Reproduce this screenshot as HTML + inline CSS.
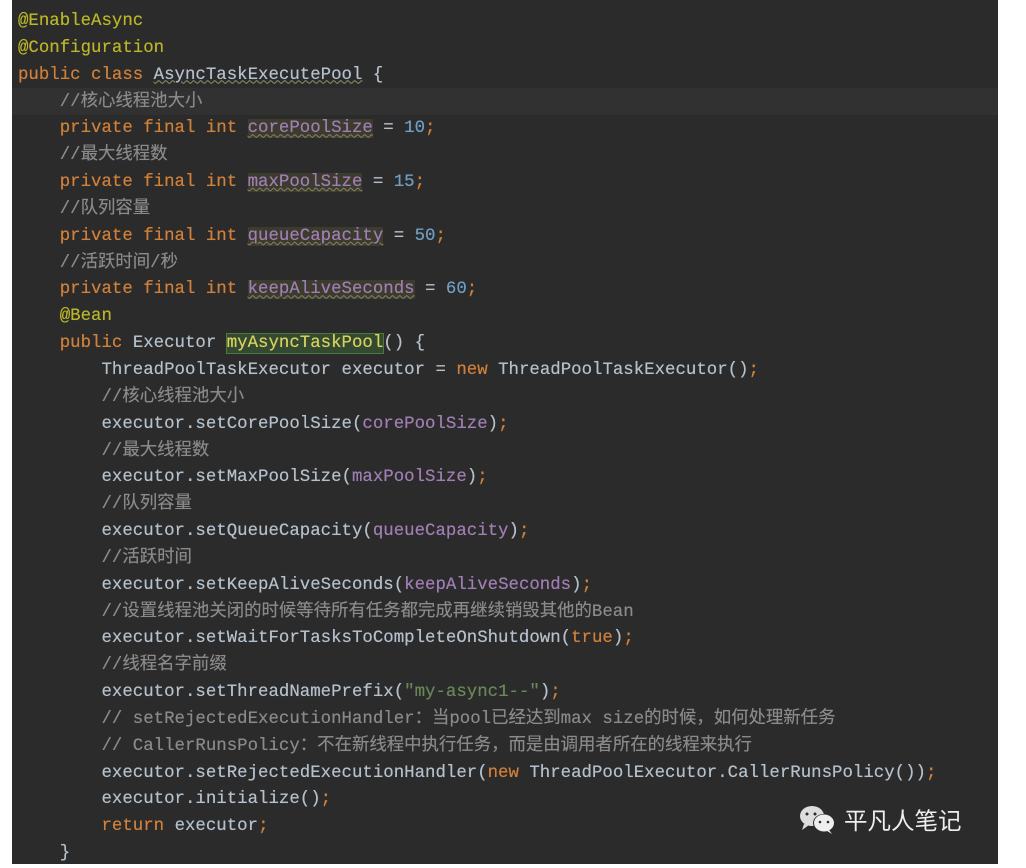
<!DOCTYPE html>
<html><head><meta charset="utf-8"><style>
html,body{margin:0;padding:0;background:#fff;width:1026px;height:866px;overflow:hidden}
#ed{position:absolute;left:12px;top:0;width:986px;height:864px;background:#2b2b2b}
#hl{position:absolute;left:12px;top:88px;width:986px;height:27px;background:#313131}
pre{position:absolute;left:18px;top:9px;margin:0;font-family:"Liberation Mono","Noto Sans CJK SC",monospace;font-size:17.4px;line-height:26.85px;color:#b4c0cc;white-space:pre;text-shadow:0 0 0.4px currentColor}
.k{color:#d0803a}.a{color:#bbb529}.c{color:#8a8a8a}.n{color:#6f9ec4}.f{color:#a07eb4}.s{color:#6a8759}
.u{text-decoration:underline wavy #7a7a50;text-decoration-thickness:1px}
.fb{background:#3b3b2e}
.m{background:#344a30;outline:1px solid #4a7a40;color:#d8d060}
#wm{position:absolute;left:798px;top:802px;color:#eee;font-family:"Noto Sans CJK SC",sans-serif;font-size:23.5px;display:flex;align-items:center;gap:6px}
</style></head><body>
<div id="ed"></div><div id="hl"></div>
<pre><span class="a">@EnableAsync</span>
<span class="a">@Configuration</span>
<span class="k">public class </span><span class="u">AsyncTaskExecutePool</span> {
    <span class="c">//核心线程池大小</span>
    <span class="k">private final int </span><span class="f fb u">corePoolSize</span> = <span class="n">10</span><span class="k">;</span>
    <span class="c">//最大线程数</span>
    <span class="k">private final int </span><span class="f fb u">maxPoolSize</span> = <span class="n">15</span><span class="k">;</span>
    <span class="c">//队列容量</span>
    <span class="k">private final int </span><span class="f fb u">queueCapacity</span> = <span class="n">50</span><span class="k">;</span>
    <span class="c">//活跃时间/秒</span>
    <span class="k">private final int </span><span class="f fb u">keepAliveSeconds</span> = <span class="n">60</span><span class="k">;</span>
    <span class="a">@Bean</span>
    <span class="k">public </span>Executor <span class="m">myAsyncTaskPool</span>() {
        ThreadPoolTaskExecutor executor = <span class="k">new </span>ThreadPoolTaskExecutor()<span class="k">;</span>
        <span class="c">//核心线程池大小</span>
        executor.setCorePoolSize(<span class="f">corePoolSize</span>)<span class="k">;</span>
        <span class="c">//最大线程数</span>
        executor.setMaxPoolSize(<span class="f">maxPoolSize</span>)<span class="k">;</span>
        <span class="c">//队列容量</span>
        executor.setQueueCapacity(<span class="f">queueCapacity</span>)<span class="k">;</span>
        <span class="c">//活跃时间</span>
        executor.setKeepAliveSeconds(<span class="f">keepAliveSeconds</span>)<span class="k">;</span>
        <span class="c">//设置线程池关闭的时候等待所有任务都完成再继续销毁其他的Bean</span>
        executor.setWaitForTasksToCompleteOnShutdown(<span class="k">true</span>)<span class="k">;</span>
        <span class="c">//线程名字前缀</span>
        executor.setThreadNamePrefix(<span class="s">"my-async1--"</span>)<span class="k">;</span>
        <span class="c">// setRejectedExecutionHandler：当pool已经达到max size的时候，如何处理新任务</span>
        <span class="c">// CallerRunsPolicy：不在新线程中执行任务，而是由调用者所在的线程来执行</span>
        executor.setRejectedExecutionHandler(<span class="k">new </span>ThreadPoolExecutor.CallerRunsPolicy())<span class="k">;</span>
        executor.initialize()<span class="k">;</span>
        <span class="k">return </span>executor<span class="k">;</span>
    }</pre>
<div id="wm"><svg width="40" height="30" viewBox="0 0 40 30"><ellipse cx="14" cy="12" rx="12" ry="10" fill="#ddd"/><path d="M6 20 L4 26 L11 21Z" fill="#ddd"/><ellipse cx="26" cy="19" rx="11" ry="9" fill="#2b2b2b"/><ellipse cx="26" cy="19" rx="10" ry="8.5" fill="#eee"/><path d="M31 26 L34 30 L29 27Z" fill="#eee"/><circle cx="9" cy="10" r="1.5" fill="#2b2b2b"/><circle cx="17" cy="10" r="1.5" fill="#2b2b2b"/><circle cx="22" cy="18" r="1.3" fill="#2b2b2b"/><circle cx="30" cy="18" r="1.3" fill="#2b2b2b"/></svg><span>平凡人笔记</span></div>
</body></html>
